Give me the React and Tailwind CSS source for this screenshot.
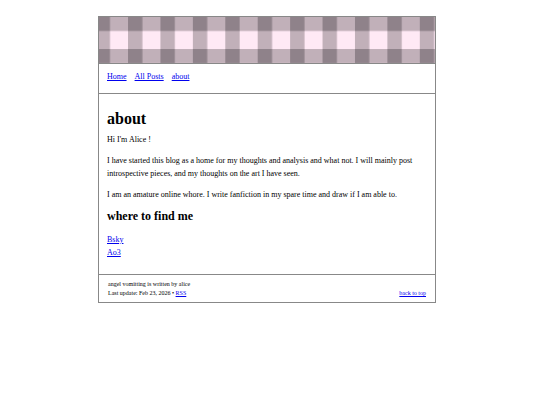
import React from "react";

const navLinks = [
  { label: "Home", href: "#home" },
  { label: "All Posts", href: "#posts" },
  { label: "about", href: "#top" },
];

const socialLinks = [
  { label: "Bsky", href: "#bsky" },
  { label: "Ao3", href: "#ao3" },
];

const linkStyle = "text-[#0000ee] underline";

const Gingham = () => {
  return (
    <svg className="block w-full h-[46px]" aria-hidden="true">
      <defs>
        <pattern
          id="gingham"
          x="-3.4"
          y="-0.4"
          width="32.42"
          height="32.42"
          patternUnits="userSpaceOnUse"
        >
          <rect width="32.42" height="32.42" fill="#ffe9f5" />
          <rect width="14.4" height="32.42" fill="#c1b0b9" />
          <rect width="32.42" height="14.4" fill="#c1b0b9" />
          <rect width="14.4" height="14.4" fill="#8f828a" />
        </pattern>
      </defs>
      <rect width="100%" height="100%" fill="url(#gingham)" />
    </svg>
  );
};

const App = () => {
  return (
    <div
      id="top"
      className="min-h-screen bg-white pt-4 pr-1.5 font-['Liberation_Serif',serif] text-[8px] leading-[13px] text-black"
    >
      <div className="mx-auto w-full max-w-[338px] border border-[#888888]">
        <header className="border-b border-[#888888]">
          <Gingham />
        </header>

        <nav className="flex gap-2 border-b border-[#888888] px-2 pt-1.5 pb-2.5">
          {navLinks.map((link) => (
            <a key={link.label} href={link.href} className={linkStyle}>
              {link.label}
            </a>
          ))}
        </nav>

        <main className="px-2 py-[15px]">
          <h1 className="text-[16px] leading-5 font-bold">about</h1>
          <p className="mt-1">Hi I'm Alice !</p>
          <p className="mt-2">
            I have started this blog as a home for my thoughts and analysis and
            what not. I will mainly post introspective pieces, and my thoughts
            on the art I have seen.
          </p>
          <p className="mt-2">
            I am an amature online whore. I write fanfiction in my spare time
            and draw if I am able to.
          </p>
          <h2 className="mt-2 text-[12px] leading-[14px] font-bold">
            where to find me
          </h2>
          <ul className="mt-2.5">
            {socialLinks.map((link) => (
              <li key={link.label}>
                <a href={link.href} className={linkStyle}>
                  {link.label}
                </a>
              </li>
            ))}
          </ul>
        </main>

        <footer className="flex items-end justify-between border-t border-[#888888] px-[9px] pt-[5px] pb-1 text-[6px] leading-[9px]">
          <div>
            <p>angel vomitting is written by alice</p>
            <p>
              Last update: Feb 23, 2026 •{" "}
              <a href="#rss" className={linkStyle}>
                RSS
              </a>
            </p>
          </div>
          <a href="#top" className={linkStyle}>
            back to top
          </a>
        </footer>
      </div>
    </div>
  );
};

export default App;
